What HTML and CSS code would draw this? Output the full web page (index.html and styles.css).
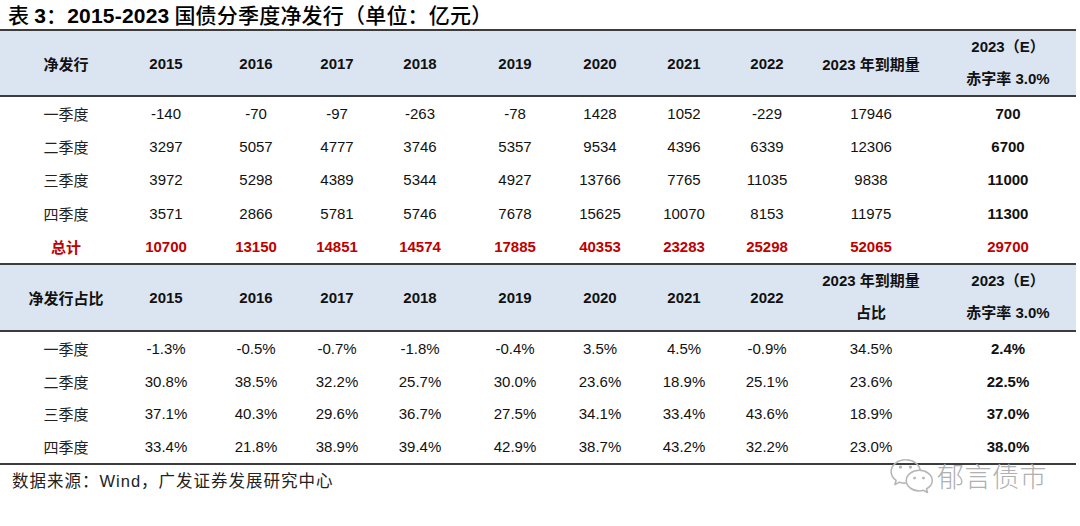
FILE: index.html
```html
<!DOCTYPE html>
<html lang="zh-CN">
<head>
<meta charset="utf-8">
<title>表 3</title>
<link rel="stylesheet" href="styles.css">
</head>
<body>
<div class="page">
  <h1 class="title">表 <span class="lat">3</span>：<span class="lat">2015-2023</span> 国债分季度净发行（单位：亿元）</h1>
  <table class="grid">
    <colgroup>
      <col class="w1"><col class="w2"><col class="w3"><col class="w4"><col class="w5"><col class="w6"><col class="w7"><col class="w8"><col class="w9"><col class="w10"><col class="w11">
    </colgroup>
    <tbody>
      <tr class="head head-a">
        <th class="first">净发行</th><th>2015</th><th>2016</th><th>2017</th><th>2018</th><th>2019</th><th>2020</th><th>2021</th><th>2022</th><th>2023 年到期量</th>
        <th><div class="ln">2023（E）</div><div class="ln">赤字率 3.0%</div></th>
      </tr>
      <tr class="row row-a"><td class="first">一季度</td><td>-140</td><td>-70</td><td>-97</td><td>-263</td><td>-78</td><td>1428</td><td>1052</td><td>-229</td><td>17946</td><td class="est">700</td></tr>
      <tr class="row row-a"><td class="first">二季度</td><td>3297</td><td>5057</td><td>4777</td><td>3746</td><td>5357</td><td>9534</td><td>4396</td><td>6339</td><td>12306</td><td class="est">6700</td></tr>
      <tr class="row row-a"><td class="first">三季度</td><td>3972</td><td>5298</td><td>4389</td><td>5344</td><td>4927</td><td>13766</td><td>7765</td><td>11035</td><td>9838</td><td class="est">11000</td></tr>
      <tr class="row row-a"><td class="first">四季度</td><td>3571</td><td>2866</td><td>5781</td><td>5746</td><td>7678</td><td>15625</td><td>10070</td><td>8153</td><td>11975</td><td class="est">11300</td></tr>
      <tr class="row row-a total"><td class="first">总计</td><td>10700</td><td>13150</td><td>14851</td><td>14574</td><td>17885</td><td>40353</td><td>23283</td><td>25298</td><td>52065</td><td>29700</td></tr>
      <tr class="head head-b">
        <th class="first">净发行占比</th><th>2015</th><th>2016</th><th>2017</th><th>2018</th><th>2019</th><th>2020</th><th>2021</th><th>2022</th>
        <th><div class="ln">2023 年到期量</div><div class="ln">占比</div></th>
        <th><div class="ln">2023（E）</div><div class="ln">赤字率 3.0%</div></th>
      </tr>
      <tr class="row row-b"><td class="first">一季度</td><td>-1.3%</td><td>-0.5%</td><td>-0.7%</td><td>-1.8%</td><td>-0.4%</td><td>3.5%</td><td>4.5%</td><td>-0.9%</td><td>34.5%</td><td class="est">2.4%</td></tr>
      <tr class="row row-b"><td class="first">二季度</td><td>30.8%</td><td>38.5%</td><td>32.2%</td><td>25.7%</td><td>30.0%</td><td>23.6%</td><td>18.9%</td><td>25.1%</td><td>23.6%</td><td class="est">22.5%</td></tr>
      <tr class="row row-b"><td class="first">三季度</td><td>37.1%</td><td>40.3%</td><td>29.6%</td><td>36.7%</td><td>27.5%</td><td>34.1%</td><td>33.4%</td><td>43.6%</td><td>18.9%</td><td class="est">37.0%</td></tr>
      <tr class="row row-b last"><td class="first">四季度</td><td>33.4%</td><td>21.8%</td><td>38.9%</td><td>39.4%</td><td>42.9%</td><td>38.7%</td><td>43.2%</td><td>32.2%</td><td>23.0%</td><td class="est">38.0%</td></tr>
    </tbody>
  </table>
  <p class="source">数据来源：Wind，广发证券发展研究中心</p>
  <div class="watermark">
    <svg class="wx" viewBox="0 0 44 36" width="46" height="38" aria-hidden="true">
      <path d="M16 2.5C8.3 2.5 2 7.6 2 13.8c0 3.4 1.9 6.4 4.8 8.5L5.6 26.2l4.3-2.3c1.9.6 3.900.9 6.100.9" fill="none" stroke="#b5b5b5" stroke-width="1.5" stroke-linejoin="round"/>
      <path d="M16 2.5c7.2 0 13.1 4.4 13.9 10.1" fill="none" stroke="#b5b5b5" stroke-width="1.5"/>
      <circle cx="11" cy="9.5" r="1.6" fill="#b5b5b5"/>
      <circle cx="20.5" cy="9.5" r="1.6" fill="#b5b5b5"/>
      <path d="M29 12.5c-6.9 0-12.5 4.4-12.5 9.9s5.6 9.9 12.5 9.9c1.4 0 2.8-.2 4-.6l3.8 2.1-1-3.4c3.4-1.8 5.6-4.7 5.6-8 0-5.5-5.6-9.9-12.4-9.9z" fill="#fff" stroke="#b5b5b5" stroke-width="1.5" stroke-linejoin="round"/>
      <circle cx="24.5" cy="20" r="1.4" fill="#b5b5b5"/>
      <circle cx="33" cy="20" r="1.4" fill="#b5b5b5"/>
    </svg>
    <span class="wm-text">郁言债市</span>
  </div>
</div>
</body>
</html>
```
FILE: styles.css
```css
html, body {
  margin: 0;
  padding: 0;
  background: #ffffff;
}
.page {
  position: relative;
  width: 1080px;
  height: 526px;
  overflow: hidden;
  font-family: "Liberation Sans", Arial, "Noto Sans CJK SC", sans-serif;
  color: #000;
}
.title {
  margin: 0;
  height: 29px;
  padding-left: 8px;
  font-family: "Noto Sans CJK SC", "Liberation Serif", serif;
  font-size: 21px;
  font-weight: 500;
  line-height: 29px;
  color: #000;
  white-space: nowrap;
  letter-spacing: 0.2px;
}
.title .lat {
  font-family: "Liberation Sans", Arial, sans-serif;
  font-weight: 700;
}
.grid {
  width: 1076px;
  table-layout: fixed;
  border-collapse: separate;
  border-spacing: 0;
  font-size: 15px;
}
.w1 { width: 120px; }
.w2 { width: 92px; }
.w3 { width: 88px; }
.w4 { width: 74px; }
.w5 { width: 92px; }
.w6 { width: 98px; }
.w7 { width: 72px; }
.w8 { width: 96px; }
.w9 { width: 70px; }
.w10 { width: 138px; }
.w11 { width: 136px; }
.grid th, .grid td {
  padding: 0;
  text-align: center;
  vertical-align: middle;
  white-space: nowrap;
}
.grid .first {
  padding-left: 12px;
  font-family: "Noto Sans CJK SC", sans-serif;
}
.head th {
  background: #dbe5f1;
  font-weight: 700;
  border-top: 2px solid #3c3c3c;
  border-bottom: 2px solid #3c3c3c;
  color: #111;
}
.head-a th { height: 64px; }
.head-b th { height: 65px; }
.head .ln {
  line-height: 32px;
}
.row td {
  color: #111;
}
.row-a td { height: 33.2px; }
.row-b td { height: 32.75px; }
.row td.first {
  font-size: 15px;
  color: #222;
}
.row .est {
  font-weight: 700;
}
.total td,
.row.total td.first {
  color: #c00000;
  font-weight: 700;
}
.last td {
  border-bottom: 2px solid #3c3c3c;
}
.source {
  margin: 0;
  padding-left: 12px;
  font-family: "Liberation Sans", Arial, "Noto Sans CJK SC", sans-serif;
  font-size: 16.5px;
  line-height: 32px;
  letter-spacing: 1px;
  color: #222;
}
.watermark {
  position: absolute;
  left: 889px;
  top: 457px;
  display: flex;
  align-items: center;
  gap: 2px;
}
.wx {
  display: block;
}
.wm-text {
  font-family: "Noto Sans CJK SC", sans-serif;
  font-weight: 300;
  font-size: 27px;
  line-height: 36px;
  color: #b0b0b0;
  letter-spacing: 0.5px;
}
```
